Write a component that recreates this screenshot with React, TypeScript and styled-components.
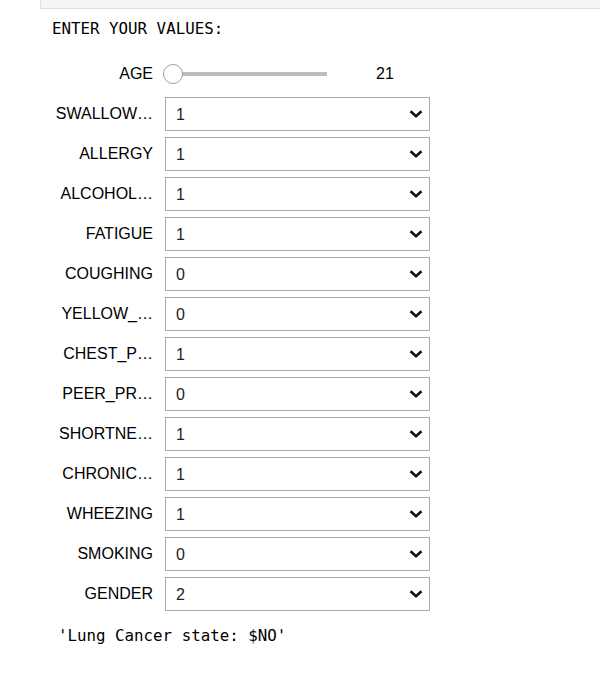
import React from "react";
import styled, { createGlobalStyle } from "styled-components";

const Global = createGlobalStyle`
  html, body { margin: 0; padding: 0; background: #ffffff; }
  body { font-family: "Liberation Sans", Arial, sans-serif; color: #000; }
`;

const Page = styled.div`
  width: 600px;
  height: 676px;
  overflow: hidden;
  box-sizing: border-box;
`;

const PrevCell = styled.div`
  margin-left: 40px;
  height: 8px;
  background: #f5f5f5;
  border-left: 1px solid #e0e0e0;
  border-bottom: 1px solid #e0e0e0;
`;

const Output = styled.div`
  display: flex;
  flex-direction: column;
  padding-left: 52px;
`;

const Mono = styled.div<{ $indent?: number }>`
  font-family: "DejaVu Sans Mono", "Liberation Mono", monospace;
  font-size: 15.8px;
  line-height: 20px;
  color: #000;
  white-space: pre;
  padding-left: ${(p) => p.$indent ?? 0}px;
`;

const Heading = styled(Mono)`
  margin-top: 10px;
  margin-bottom: 18px;
`;

const Result = styled(Mono)`
  margin-top: 9px;
`;

const Row = styled.div`
  display: flex;
  align-items: center;
  height: 34px;
  margin-bottom: 6px;
`;

const Label = styled.div`
  width: 101px;
  flex: none;
  text-align: right;
  font-size: 16px;
  white-space: nowrap;
  overflow: hidden;
  margin-right: 12px;
  color: #000;
`;

const SliderBox = styled.div`
  position: relative;
  width: 174px;
  height: 34px;
  margin-left: -2px;
  flex: none;
`;

const Track = styled.div`
  position: absolute;
  left: 10px;
  right: 10px;
  top: 15px;
  height: 4px;
  background: #bdbdbd;
`;

const Handle = styled.div`
  position: absolute;
  left: 0;
  top: 7px;
  width: 18px;
  height: 18px;
  border-radius: 50%;
  background: #ffffff;
  border: 1px solid #9e9e9e;
`;

const Readout = styled.div`
  margin-left: 39px;
  font-size: 16px;
  color: #000;
`;

const SelectWrap = styled.div`
  position: relative;
  width: 265px;
  height: 34px;
  flex: none;
`;

const Select = styled.select`
  appearance: none;
  -webkit-appearance: none;
  width: 100%;
  height: 100%;
  box-sizing: border-box;
  border: 1px solid #a9a9a9;
  border-radius: 0;
  background: #ffffff;
  padding: 0 30px 0 10px;
  font-family: "Liberation Sans", Arial, sans-serif;
  font-size: 16px;
  color: #222;
  outline: none;
`;

const Chevron = styled.svg`
  position: absolute;
  right: 7px;
  top: 13px;
  width: 14px;
  height: 8px;
  pointer-events: none;
`;

type Field = { label: string; value: string };

const fields: Field[] = [
  { label: "SWALLOW…", value: "1" },
  { label: "ALLERGY", value: "1" },
  { label: "ALCOHOL…", value: "1" },
  { label: "FATIGUE", value: "1" },
  { label: "COUGHING", value: "0" },
  { label: "YELLOW_…", value: "0" },
  { label: "CHEST_P…", value: "1" },
  { label: "PEER_PR…", value: "0" },
  { label: "SHORTNE…", value: "1" },
  { label: "CHRONIC…", value: "1" },
  { label: "WHEEZING", value: "1" },
  { label: "SMOKING", value: "0" },
  { label: "GENDER", value: "2" },
];

const options: Record<string, string[]> = {
  GENDER: ["1", "2"],
};

const Dropdown: React.FC<Field> = ({ label, value }) => {
  const opts = options[label] ?? ["0", "1"];
  return (
    <Row>
      <Label>{label}</Label>
      <SelectWrap>
        <Select defaultValue={value}>
          {opts.map((o) => (
            <option key={o} value={o}>
              {o}
            </option>
          ))}
        </Select>
        <Chevron viewBox="0 0 14 8">
          <path d="M1.5 1.2 L7 6.2 L12.5 1.2" fill="none" stroke="#111" strokeWidth="2.6" />
        </Chevron>
      </SelectWrap>
    </Row>
  );
};

export default function App() {
  return (
    <Page>
      <Global />
      <PrevCell />
      <Output>
        <Heading>ENTER YOUR VALUES:</Heading>
        <Row>
          <Label>AGE</Label>
          <SliderBox>
            <Track />
            <Handle />
          </SliderBox>
          <Readout>21</Readout>
        </Row>
        {fields.map((f) => (
          <Dropdown key={f.label} {...f} />
        ))}
        <Result $indent={6}>'Lung Cancer state: $NO'</Result>
      </Output>
    </Page>
  );
}
